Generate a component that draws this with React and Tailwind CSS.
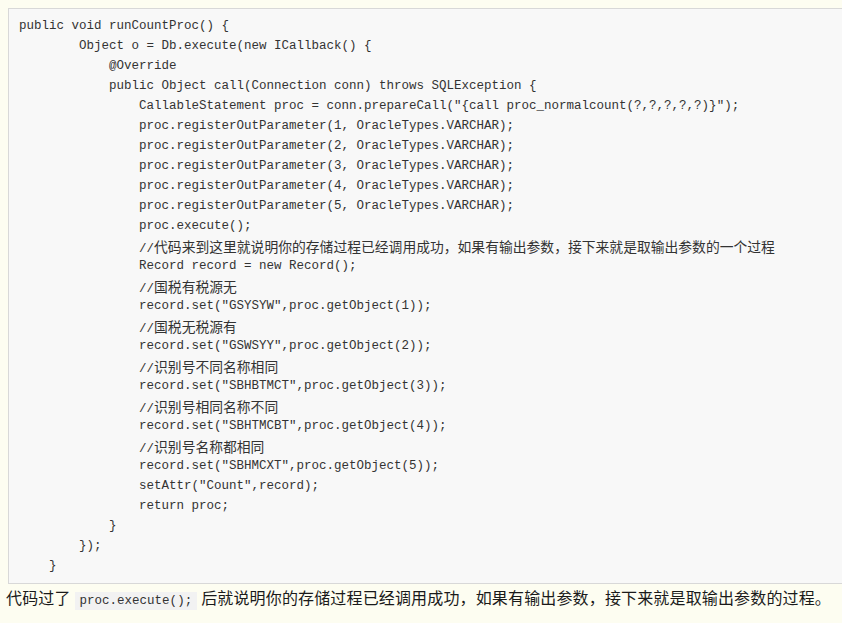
const lines = [
  [0, 'public void runCountProc() {'],
  [8, 'Object o = Db.execute(new ICallback() {'],
  [12, '@Override'],
  [12, 'public Object call(Connection conn) throws SQLException {'],
  [16, 'CallableStatement proc = conn.prepareCall("{call proc_normalcount(?,?,?,?,?)}");'],
  [16, 'proc.registerOutParameter(1, OracleTypes.VARCHAR);'],
  [16, 'proc.registerOutParameter(2, OracleTypes.VARCHAR);'],
  [16, 'proc.registerOutParameter(3, OracleTypes.VARCHAR);'],
  [16, 'proc.registerOutParameter(4, OracleTypes.VARCHAR);'],
  [16, 'proc.registerOutParameter(5, OracleTypes.VARCHAR);'],
  [16, 'proc.execute();'],
  [16, '//', '代码来到这里就说明你的存储过程已经调用成功，如果有输出参数，接下来就是取输出参数的一个过程'],
  [16, 'Record record = new Record();'],
  [16, '//', '国税有税源无'],
  [16, 'record.set("GSYSYW",proc.getObject(1));'],
  [16, '//', '国税无税源有'],
  [16, 'record.set("GSWSYY",proc.getObject(2));'],
  [16, '//', '识别号不同名称相同'],
  [16, 'record.set("SBHBTMCT",proc.getObject(3));'],
  [16, '//', '识别号相同名称不同'],
  [16, 'record.set("SBHTMCBT",proc.getObject(4));'],
  [16, '//', '识别号名称都相同'],
  [16, 'record.set("SBHMCXT",proc.getObject(5));'],
  [16, 'setAttr("Count",record);'],
  [16, 'return proc;'],
  [12, '}'],
  [8, '});'],
  [4, '}'],
];

function CodeLine({ indent, code, cjk }) {
  return (
    <div className="h-[20px] leading-[20px] whitespace-pre">
      {' '.repeat(indent)}
      {code}
      {cjk && (
        <span className="font-['Noto_Sans_CJK_SC',sans-serif] text-[13.8px]">
          {cjk}
        </span>
      )}
    </div>
  );
}

export default function App() {
  return (
    <div className="min-h-[623px] w-[842px] overflow-hidden bg-[#fdfdf1] pt-2">
      <div className="ml-2 border border-r-0 border-[#d8d8d8] bg-[#f8f8f8] pl-[10px] pt-[7px] pb-[7px] font-['Liberation_Mono','DejaVu_Sans_Mono',monospace] text-[12.5px] text-[#333]">
        {lines.map(([indent, code, cjk], i) => (
          <CodeLine key={i} indent={indent} code={code} cjk={cjk} />
        ))}
      </div>
      <p className="whitespace-nowrap pl-[6px] font-['Noto_Sans_CJK_SC',sans-serif] text-[16px] leading-[26px] tracking-[0.15px] text-[#1a1a1a]">
        代码过了
        <code className="mx-[4px] bg-[#f2f2f2] px-[5px] py-[2px] font-['Liberation_Mono','DejaVu_Sans_Mono',monospace] text-[12.5px] tracking-normal text-[#333]">
          proc.execute();
        </code>
        后就说明你的存储过程已经调用成功，如果有输出参数，接下来就是取输出参数的过程。
      </p>
    </div>
  );
}
